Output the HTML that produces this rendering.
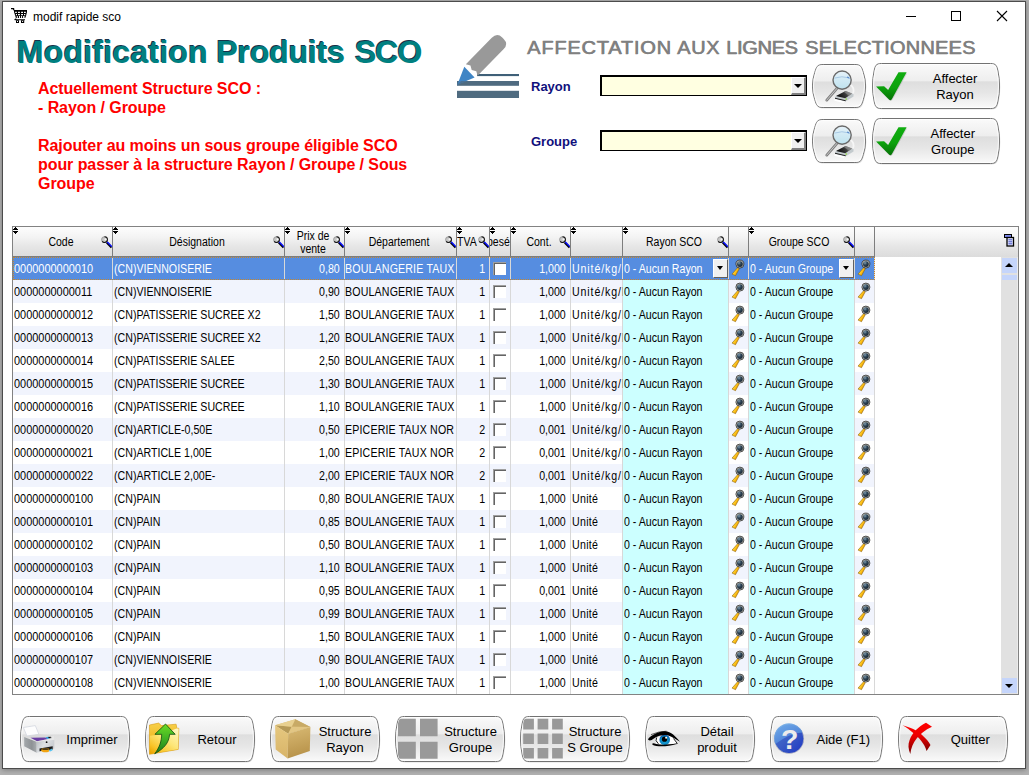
<!DOCTYPE html>
<html lang="fr"><head><meta charset="utf-8"><title>modif rapide sco</title>
<style>
*{box-sizing:border-box;margin:0;padding:0}
html,body{width:1029px;height:775px;overflow:hidden}
body{position:relative;background:#b2b2b2;font-family:"Liberation Sans",sans-serif;font-size:11px;color:#000}
.abs{position:absolute}
.win{position:absolute;left:2px;top:1px;width:1024px;height:768px;background:#fff;border:1px solid #4c4c4c;box-shadow:0 1px 5px 0 rgba(0,0,0,.32)}
.ttl{position:absolute;left:33px;top:9px;font-size:12px;line-height:16px;color:#000;white-space:nowrap}
.h1{position:absolute;top:33px;font-size:32px;line-height:38px;font-weight:bold;color:#008080;white-space:nowrap;text-shadow:-1px -1px 0 #16324a}
.red{position:absolute;left:38px;top:79px;width:400px;letter-spacing:-.07px;font-size:16px;line-height:19px;font-weight:bold;color:#ff0000}
.aff{position:absolute;top:35px;font-size:20px;line-height:24px;color:#808080;white-space:nowrap;transform:scaleY(.96);transform-origin:0 75%;text-shadow:.6px 0 0 #808080;-webkit-text-stroke:.3px #808080}
.lbl{position:absolute;left:531px;font-size:13px;line-height:16px;font-weight:bold;color:#10107c;white-space:nowrap}
.combo{position:absolute;left:600px;width:207px;height:21px;background:#ffffe1;border:2px solid #000;border-right-width:1px;border-bottom-width:1px}
.combo b{position:absolute;right:0;top:0;width:15px;height:18px;background:#f0f0f0;border:1px solid #fff;border-right:2px solid #808080;border-bottom:2px solid #808080}
.combo b:after{content:"";position:absolute;left:2px;top:6px;border:4px solid transparent;border-top:4px solid #000;border-bottom:none}
.btn{position:absolute;border:1px solid transparent;font-size:13px;line-height:16px;color:#000;text-align:center}
.bb{position:absolute;left:-1px;top:-1px}
.btn .t{position:absolute;left:0;right:0;text-align:center;white-space:nowrap}
.grid{position:absolute;left:12px;top:226px;width:1007px;height:469px;background:#fff;border:1px solid #828282}
.hd{position:absolute;left:0;top:0;height:30px;width:1005px;background:linear-gradient(#fdfdfd 0%,#f3f3f3 35%,#e6e6e6 65%,#dcdcdc 100%)}
.hd:after{content:"";position:absolute;left:0;top:29px;width:862px;height:1px;background:#7d7d7d}
.hc{position:absolute;top:0;height:29px;border-right:1px solid #7d7d7d;white-space:nowrap;overflow:hidden}
.hc .tx{position:absolute;font-size:12px;line-height:13px;text-align:center;transform:scaleX(.875);transform-origin:50% 0}
.rows{position:absolute;left:0;top:30px;width:988px;height:437px;overflow:hidden}
.bg{position:absolute;left:0;width:862px;height:23px}
.bg.alt{background:#f1f4fd}
.bg.sel{background:#568de0}
.cy{position:absolute;top:23px;width:105px;height:414px;background:#ccffff}
.vl{position:absolute;top:0;width:1px;height:437px;background:#d8d8d8}
.focus{position:absolute;left:0;top:0;width:862px;height:23px;border:1px dotted #c8862a}
.r{position:absolute;left:0;width:863px;height:23px;white-space:nowrap}
.r.sel{color:#fff}
.c{position:absolute;top:0;height:23px;line-height:24px;font-size:12px;overflow:hidden;transform:scaleX(.885);white-space:nowrap}
.key{position:absolute;top:2px}
.cb{position:absolute;left:480px;top:5px;width:13px;height:13px;background:#fff;box-shadow:inset 1px 1px 0 #a0a0a0,inset 2px 2px 0 #646464}
.dd{position:absolute;top:2px;width:15px;height:19px;background:#f0f0f0;border:1px solid #fff;border-right-color:#606060;border-bottom-color:#606060}
.dd:after{content:"";position:absolute;left:2.5px;top:6px;border:3.7px solid transparent;border-top:4px solid #000;border-bottom:none}
.c1{left:1px;width:107.6px;transform-origin:0 0;transform:scaleX(0.911)}
.c2{left:101px;width:192.1px;transform-origin:0 0}
.c3{left:264.3px;width:66.7px;padding-right:4.5px;text-align:right;transform-origin:100% 0}
.c4{left:332px;width:125.4px;transform-origin:0 0}
.c5{left:439.8px;width:36.2px;padding-right:4.5px;text-align:right;transform-origin:100% 0}
.c7{left:490.3px;width:66.7px;padding-right:4.5px;text-align:right;transform-origin:100% 0}
.c8{left:559px;width:56.5px;transform-origin:0 0}
.c9{left:611px;width:117.5px;transform-origin:0 0}
.c11{left:737px;width:117.5px;transform-origin:0 0}
.c8{letter-spacing:1px}
.c8.u{letter-spacing:.35px}
.c4{letter-spacing:.18px}
</style></head>
<body>
<svg width="0" height="0" style="position:absolute">
<defs>
<linearGradient id="gDev" x1="0" y1="0.3" x2="1" y2="0"><stop offset="0" stop-color="#0e0e0e"/><stop offset="0.5" stop-color="#3a3a3a"/><stop offset="1" stop-color="#b0b0b0"/></linearGradient>
<linearGradient id="gBtn" x1="0" y1="0" x2="0" y2="1"><stop offset="0" stop-color="#fbfbfb"/><stop offset="0.12" stop-color="#f6f6f6"/><stop offset="0.38" stop-color="#eeeeee"/><stop offset="0.41" stop-color="#dedede"/><stop offset="0.65" stop-color="#e6e6e6"/><stop offset="0.88" stop-color="#f3f3f3"/><stop offset="1" stop-color="#fafafa"/></linearGradient>
<linearGradient id="gHandle" x1="0" y1="0" x2="1" y2="0.6"><stop offset="0" stop-color="#ffe04a"/><stop offset="0.55" stop-color="#ffc81e"/><stop offset="1" stop-color="#e08a00"/></linearGradient>
<radialGradient id="gLens" cx="0.35" cy="0.3" r="0.75"><stop offset="0" stop-color="#7f9cb0"/><stop offset="0.45" stop-color="#2f4658"/><stop offset="1" stop-color="#16222e"/></radialGradient>
<linearGradient id="gCheck" x1="0" y1="0" x2="0" y2="1"><stop offset="0" stop-color="#10ad10"/><stop offset="0.55" stop-color="#0ca20c"/><stop offset="1" stop-color="#087208"/></linearGradient>
<linearGradient id="gGlass" x1="0" y1="0" x2="0" y2="1"><stop offset="0" stop-color="#e8f3fa"/><stop offset="0.4" stop-color="#d4ebf5"/><stop offset="1" stop-color="#bfe2ee"/></linearGradient>
<g id="keyico">
<path d="M1.0 15.1 L4.5 16.7 L8.3 9.7 L6.8 8.5 Z" fill="url(#gHandle)" stroke="#7a5200" stroke-width="0.5"/>
<circle cx="8.9" cy="5.1" r="4" fill="#c4c4bc" stroke="#2b2b2b" stroke-width="0.8"/>
<circle cx="8.9" cy="5.1" r="2.9" fill="url(#gLens)"/>
</g>
<g id="hmag">
<path d="M7.7 7.5 L12.5 12.5" stroke="#000" stroke-width="2"/>
<path d="M8 6.8 L13 11.8" stroke="#0a12ff" stroke-width="1.6"/>
<circle cx="5.5" cy="4.6" r="2.9" fill="#c6c6c6" stroke="#9a9a9a" stroke-width="1"/>
<path d="M5.5 1.7 A2.9 2.9 0 0 1 5.5 7.5 A2.9 2.9 0 0 1 3.2 6.4" fill="none" stroke="#111" stroke-width="1.1"/>
<circle cx="6.6" cy="4.4" r="1.1" fill="#f4f4f4"/>
</g>
<g id="hsort" shape-rendering="crispEdges">
<path d="M2 0h1v1h-1z M1 1h3v1h-3z M0 2h5v1h-5z M0 4h5v1h-5z M1 5h3v1h-3z M2 6h1v1h-1z" fill="#000"/>
</g>
<g id="bigmag">
<path d="M13.8 30.6 L24.4 18.4" stroke="#7e7e7e" stroke-width="2.8" stroke-linecap="round"/>
<path d="M13.8 30.6 L24.4 18.4" stroke="#cfcfcf" stroke-width="0.9" stroke-linecap="round"/>
<path d="M22 27.5 L32.5 21.5 L40.5 24.5 L40.5 27 L32.8 31.8 L22 29.2 Z" fill="#c3cacd"/>
<path d="M23 26.6 L32.5 21.6 L39.2 24 L32.2 28.8 Z" fill="url(#gDev)"/>
<path d="M31 22.4 L32.5 21.6 L39.2 24 L36 26.2 Z" fill="#8c8c8c" opacity=".7"/>
<path d="M22 28.2 L32.6 30.8 L32.8 31.8 L22 29.2 Z" fill="#1e1e1e"/>
<path d="M21.5 30.4 L31 32.8" stroke="#fff" stroke-width="1.5"/>
<circle cx="33.2" cy="29.6" r="0.8" fill="#8fdc3a"/>
<path d="M37 15 Q42 18 40 24" fill="none" stroke="#f6f6f6" stroke-width="1.8"/>
<circle cx="29.1" cy="10.6" r="9.1" fill="url(#gGlass)" stroke="#6a6a6a" stroke-width="1.4"/>
<path d="M21.5 8.6 Q29 6 36 8.4" fill="none" stroke="#a9c9e4" stroke-width="1"/>
<path d="M34 7.6 Q35.8 7.8 36.4 9" fill="none" stroke="#5f8fd0" stroke-width="1.1"/>
</g>
<g id="check">
<path d="M4.8 24.4 L12.8 24 L16.8 27.6 L27 10.2 L35.2 10.2 L20.4 37 Q19 38.6 17.6 37.6 Z" fill="#000" opacity=".12"/>
<path d="M4.05 23.5 L12.1 23.2 L16.1 26.9 L26.5 9.2 L34.6 9.2 L19.8 36.3 Q18.6 37.8 17.2 36.8 Z" fill="url(#gCheck)"/>
</g>
</defs>
</svg>
<div class="win"></div>
<svg class="abs" style="left:10px;top:6px" width="20" height="18" viewBox="0 0 20 18">
<path d="M1 2h3.2v1.2h-3.2z M3.6 2.6l1.2 1.6-0.9 0.6-1.2-1.6z" fill="#000"/>
<path d="M4 4H17V6L16 10L15.2 12.1H5.9L5 9L4 6Z" fill="#000"/>
<path d="M5.2 5.7h1.6v1.3h-1.6z M8 5.7h1.9v1.3h-1.9z M11.1 5.7h1.9v1.3h-1.9z M14 5.7h1.8v1.3h-1.8z M5.9 7.9h1.1v1.3h-1.1z M8 7.9h1.9v1.3h-1.9z M11.1 7.9h1.9v1.3h-1.9z M14 7.9h1.3v1.3h-1.3z M6.8 10h1v1.9h-1z M9 10h1v1.9h-1z M11.1 10h1v1.9h-1z M13.1 10h1.4v1.9h-1.4z" fill="#fff"/>
<path d="M5.4 12.5 L4.2 13.5 L4.8 14.3 H15 V13.3 H6.3 L6.6 12.8 Z" fill="#000"/>
<path d="M6 14.2h3v2.8h-3z M11 14.2h3.2v2.8h-3.2z" fill="#000"/>
<path d="M7 15.1h1v1h-1z M12.1 15.1h1v1h-1z" fill="#fff"/>
</svg>
<div class="ttl">modif rapide sco</div>
<svg class="abs" style="left:900px;top:5px" width="115" height="24" viewBox="0 0 115 24">
<path d="M6 11.5 H16" stroke="#000" stroke-width="1"/>
<rect x="51.5" y="6.5" width="9" height="9" fill="none" stroke="#000" stroke-width="1"/>
<path d="M97 6 L107 16 M107 6 L97 16" stroke="#000" stroke-width="1.1"/>
</svg>
<div class="h1" style="left:17px;letter-spacing:.22px">Modification</div><div class="h1" style="left:216.4px;letter-spacing:-.15px">Produits</div><div class="h1" style="left:355px;letter-spacing:-1px">SCO</div>
<div class="red">Actuellement Structure SCO :<br>- Rayon / Groupe<br><br>Rajouter au moins un sous groupe éligible SCO<br>pour passer à la structure Rayon / Groupe / Sous<br>Groupe</div>
<svg class="abs" style="left:448px;top:28px" width="80" height="80" viewBox="0 0 80 80">
<rect x="9" y="62.8" width="62" height="7.2" fill="#4f6b80"/>
<rect x="9" y="53" width="62" height="4.8" fill="#4f6b80"/>
<rect x="29" y="46" width="42" height="2.1" fill="#3f6078"/>
<path d="M9.3 56.8 L16.3 38.8 L26.6 49.6 Z" fill="#3f85c5"/>
<path d="M9.3 56.6 L13 53 L20 53 Z" fill="#4a7194"/>
<g transform="translate(23.7,42) rotate(-45.5)">
<path d="M0 -8.2 L37 -8.2 Q44.6 -8.2 44.6 -1 L44.6 1 Q44.6 8.2 37 8.2 L0 8.2 L2.4 4.1 L0 0 L2.4 -4.1 Z" fill="#999999"/>
</g>
</svg>
<div class="aff" style="left:527px;letter-spacing:.8px">AFFECTATION</div><div class="aff" style="left:677px;letter-spacing:.6px">AUX</div><div class="aff" style="left:726px;letter-spacing:-.3px">LIGNES</div><div class="aff" style="left:805px;letter-spacing:.2px">SELECTIONNEES</div>
<div class="lbl" style="top:79px">Rayon</div>
<div class="lbl" style="top:134px">Groupe</div>
<div class="combo" style="top:75px"><b></b></div>
<div class="combo" style="top:130px"><b></b></div>
<div class="btn" style="left:812px;top:64px;width:54px;height:44px"><svg class="bb" width="56" height="46" viewBox="0 0 56 46"><path d="M11.20 0.50 H42.80 C49.17 0.50 49.47 3.04 51.30 8.50 A42.52 42.52 0 0 1 51.30 35.50 C49.47 40.96 49.17 43.50 42.80 43.50 H11.20 C4.83 43.50 4.53 40.96 2.70 35.50 A42.52 42.52 0 0 1 2.70 8.50 C4.53 3.04 4.83 0.50 11.20 0.50 Z" transform="translate(0.8,1)" fill="#000" opacity=".13"/><path d="M11.20 0.50 H42.80 C49.17 0.50 49.47 3.04 51.30 8.50 A42.52 42.52 0 0 1 51.30 35.50 C49.47 40.96 49.17 43.50 42.80 43.50 H11.20 C4.83 43.50 4.53 40.96 2.70 35.50 A42.52 42.52 0 0 1 2.70 8.50 C4.53 3.04 4.83 0.50 11.20 0.50 Z" fill="url(#gBtn)" stroke="#727272" stroke-width="1"/><path d="M11.40 1.50 H42.60 C48.38 1.50 48.63 3.79 50.30 8.70 A41.30 41.30 0 0 1 50.30 35.30 C48.63 40.21 48.38 42.50 42.60 42.50 H11.40 C5.62 42.50 5.37 40.21 3.70 35.30 A41.30 41.30 0 0 1 3.70 8.70 C5.37 3.79 5.62 1.50 11.40 1.50 Z" fill="none" stroke="#fff" stroke-width="1.2" opacity=".75"/></svg><svg class="abs" style="left:1px;top:0" width="53" height="44" viewBox="0 0 53 44"><use href="#bigmag" x="-1" y="4.5"/></svg></div>
<div class="btn" style="left:812px;top:119px;width:54px;height:44px"><svg class="bb" width="56" height="46" viewBox="0 0 56 46"><path d="M11.20 0.50 H42.80 C49.17 0.50 49.47 3.04 51.30 8.50 A42.52 42.52 0 0 1 51.30 35.50 C49.47 40.96 49.17 43.50 42.80 43.50 H11.20 C4.83 43.50 4.53 40.96 2.70 35.50 A42.52 42.52 0 0 1 2.70 8.50 C4.53 3.04 4.83 0.50 11.20 0.50 Z" transform="translate(0.8,1)" fill="#000" opacity=".13"/><path d="M11.20 0.50 H42.80 C49.17 0.50 49.47 3.04 51.30 8.50 A42.52 42.52 0 0 1 51.30 35.50 C49.47 40.96 49.17 43.50 42.80 43.50 H11.20 C4.83 43.50 4.53 40.96 2.70 35.50 A42.52 42.52 0 0 1 2.70 8.50 C4.53 3.04 4.83 0.50 11.20 0.50 Z" fill="url(#gBtn)" stroke="#727272" stroke-width="1"/><path d="M11.40 1.50 H42.60 C48.38 1.50 48.63 3.79 50.30 8.70 A41.30 41.30 0 0 1 50.30 35.30 C48.63 40.21 48.38 42.50 42.60 42.50 H11.40 C5.62 42.50 5.37 40.21 3.70 35.30 A41.30 41.30 0 0 1 3.70 8.70 C5.37 3.79 5.62 1.50 11.40 1.50 Z" fill="none" stroke="#fff" stroke-width="1.2" opacity=".75"/></svg><svg class="abs" style="left:1px;top:0" width="53" height="44" viewBox="0 0 53 44"><use href="#bigmag" x="-1" y="4.5"/></svg></div>
<div class="btn" style="left:872px;top:63px;width:128px;height:46px"><svg class="bb" width="130" height="48" viewBox="0 0 130 48"><path d="M9.50 0.50 H118.50 C124.05 0.50 124.78 2.69 125.90 7.90 A72.05 72.05 0 0 1 125.90 38.10 C124.78 43.31 124.05 45.50 118.50 45.50 H9.50 C3.95 45.50 3.22 43.31 2.10 38.10 A72.05 72.05 0 0 1 2.10 7.90 C3.22 2.69 3.95 0.50 9.50 0.50 Z" transform="translate(0.8,1)" fill="#000" opacity=".13"/><path d="M9.50 0.50 H118.50 C124.05 0.50 124.78 2.69 125.90 7.90 A72.05 72.05 0 0 1 125.90 38.10 C124.78 43.31 124.05 45.50 118.50 45.50 H9.50 C3.95 45.50 3.22 43.31 2.10 38.10 A72.05 72.05 0 0 1 2.10 7.90 C3.22 2.69 3.95 0.50 9.50 0.50 Z" fill="url(#gBtn)" stroke="#727272" stroke-width="1"/><path d="M9.70 1.50 H118.30 C123.25 1.50 123.89 3.46 124.90 8.10 A70.18 70.18 0 0 1 124.90 37.90 C123.89 42.54 123.25 44.50 118.30 44.50 H9.70 C4.75 44.50 4.11 42.54 3.10 37.90 A70.18 70.18 0 0 1 3.10 8.10 C4.11 3.46 4.75 1.50 9.70 1.50 Z" fill="none" stroke="#fff" stroke-width="1.2" opacity=".75"/></svg><svg class="abs" style="left:-1px;top:-1px" width="40" height="44" viewBox="0 0 40 44"><use href="#check"/></svg><span class="t" style="left:38px;top:7px">Affecter<br>Rayon</span></div>
<div class="btn" style="left:872px;top:118px;width:128px;height:46px"><svg class="bb" width="130" height="48" viewBox="0 0 130 48"><path d="M9.50 0.50 H118.50 C124.05 0.50 124.78 2.69 125.90 7.90 A72.05 72.05 0 0 1 125.90 38.10 C124.78 43.31 124.05 45.50 118.50 45.50 H9.50 C3.95 45.50 3.22 43.31 2.10 38.10 A72.05 72.05 0 0 1 2.10 7.90 C3.22 2.69 3.95 0.50 9.50 0.50 Z" transform="translate(0.8,1)" fill="#000" opacity=".13"/><path d="M9.50 0.50 H118.50 C124.05 0.50 124.78 2.69 125.90 7.90 A72.05 72.05 0 0 1 125.90 38.10 C124.78 43.31 124.05 45.50 118.50 45.50 H9.50 C3.95 45.50 3.22 43.31 2.10 38.10 A72.05 72.05 0 0 1 2.10 7.90 C3.22 2.69 3.95 0.50 9.50 0.50 Z" fill="url(#gBtn)" stroke="#727272" stroke-width="1"/><path d="M9.70 1.50 H118.30 C123.25 1.50 123.89 3.46 124.90 8.10 A70.18 70.18 0 0 1 124.90 37.90 C123.89 42.54 123.25 44.50 118.30 44.50 H9.70 C4.75 44.50 4.11 42.54 3.10 37.90 A70.18 70.18 0 0 1 3.10 8.10 C4.11 3.46 4.75 1.50 9.70 1.50 Z" fill="none" stroke="#fff" stroke-width="1.2" opacity=".75"/></svg><svg class="abs" style="left:-1px;top:-1px" width="40" height="44" viewBox="0 0 40 44"><use href="#check"/></svg><span class="t" style="left:33.5px;top:7px">Affecter<br>Groupe</span></div>
<div class="grid">
<div class="hd">
<div class="hc" style="left:0px;width:100px"><svg class="abs" style="left:0;top:0" width="5" height="7" viewBox="0 0 5 7"><use href="#hsort"/></svg><span class="tx" style="left:-12px;width:120px;top:9px">Code</span><svg class="abs" style="right:0px;top:8px" width="13" height="14" viewBox="0 0 13 14"><use href="#hmag"/></svg></div>
<div class="hc" style="left:100px;width:172px"><svg class="abs" style="left:0;top:0" width="5" height="7" viewBox="0 0 5 7"><use href="#hsort"/></svg><span class="tx" style="left:24px;width:120px;top:9px">Désignation</span><svg class="abs" style="right:0px;top:8px" width="13" height="14" viewBox="0 0 13 14"><use href="#hmag"/></svg></div>
<div class="hc" style="left:272px;width:60px"><svg class="abs" style="left:0;top:0" width="5" height="7" viewBox="0 0 5 7"><use href="#hsort"/></svg><span class="tx" style="left:-32px;width:120px;top:3px">Prix de<br>vente</span><svg class="abs" style="right:0px;top:8px" width="13" height="14" viewBox="0 0 13 14"><use href="#hmag"/></svg></div>
<div class="hc" style="left:332px;width:112px"><svg class="abs" style="left:0;top:0" width="5" height="7" viewBox="0 0 5 7"><use href="#hsort"/></svg><span class="tx" style="left:-6px;width:120px;top:9px">Département</span><svg class="abs" style="right:0px;top:8px" width="13" height="14" viewBox="0 0 13 14"><use href="#hmag"/></svg></div>
<div class="hc" style="left:444px;width:33px"><svg class="abs" style="left:0;top:0" width="5" height="7" viewBox="0 0 5 7"><use href="#hsort"/></svg><span class="tx" style="left:0px;text-align:left;transform-origin:0 0;top:9px">TVA</span><svg class="abs" style="right:0px;top:8px" width="13" height="14" viewBox="0 0 13 14"><use href="#hmag"/></svg></div>
<div class="hc" style="left:477px;width:21px"><svg class="abs" style="left:0;top:0" width="5" height="7" viewBox="0 0 5 7"><use href="#hsort"/></svg><span class="tx" style="left:-3px;text-align:left;transform-origin:0 0;top:9px">pesé</span></div>
<div class="hc" style="left:498px;width:60px"><svg class="abs" style="left:0;top:0" width="5" height="7" viewBox="0 0 5 7"><use href="#hsort"/></svg><span class="tx" style="left:-32px;width:120px;top:9px">Cont.</span><svg class="abs" style="right:0px;top:8px" width="13" height="14" viewBox="0 0 13 14"><use href="#hmag"/></svg></div>
<div class="hc" style="left:558px;width:52px"><svg class="abs" style="left:0;top:0" width="5" height="7" viewBox="0 0 5 7"><use href="#hsort"/></svg></div>
<div class="hc" style="left:610px;width:106px"><svg class="abs" style="left:0;top:0" width="5" height="7" viewBox="0 0 5 7"><use href="#hsort"/></svg><span class="tx" style="left:-9px;width:120px;top:9px">Rayon SCO</span><svg class="abs" style="right:0px;top:8px" width="13" height="14" viewBox="0 0 13 14"><use href="#hmag"/></svg></div>
<div class="hc" style="left:716px;width:20px"></div>
<div class="hc" style="left:736px;width:106px"><svg class="abs" style="left:0;top:0" width="5" height="7" viewBox="0 0 5 7"><use href="#hsort"/></svg><span class="tx" style="left:-10px;width:120px;top:9px">Groupe SCO</span><svg class="abs" style="right:0px;top:8px" width="13" height="14" viewBox="0 0 13 14"><use href="#hmag"/></svg></div>
<div class="hc" style="left:842px;width:20px"></div>
<svg class="abs" style="left:991px;top:7px" width="11" height="13" viewBox="0 0 11 13"><rect x="0.5" y="0.5" width="7" height="3" fill="#7a86e8" stroke="#000" stroke-width="1"/><rect x="3" y="3.5" width="6.5" height="8.5" fill="#e6e9ff" stroke="#000" stroke-width="1.3"/><path d="M4.4 5.8 H8.2 M4.4 7.8 H8.2 M4.4 9.8 H8.2" stroke="#4450c8" stroke-width="1"/></svg>
</div>
<div class="rows">
<div class="bg sel" style="top:0"></div>
<div class="bg alt" style="top:23px"></div><div class="bg alt" style="top:69px"></div><div class="bg alt" style="top:115px"></div><div class="bg alt" style="top:161px"></div><div class="bg alt" style="top:207px"></div><div class="bg alt" style="top:253px"></div><div class="bg alt" style="top:299px"></div><div class="bg alt" style="top:345px"></div><div class="bg alt" style="top:391px"></div>
<div class="cy" style="left:610px"></div><div class="cy" style="left:736px"></div>
<div class="vl" style="left:99px"></div><div class="vl" style="left:271px"></div><div class="vl" style="left:331px"></div><div class="vl" style="left:443px"></div><div class="vl" style="left:476px"></div><div class="vl" style="left:497px"></div><div class="vl" style="left:557px"></div><div class="vl" style="left:609px"></div><div class="vl" style="left:715px"></div><div class="vl" style="left:735px"></div><div class="vl" style="left:841px"></div><div class="vl" style="left:861px"></div>
<div class="focus"></div>
<div class="r sel" style="top:0px"><span class="c c1">0000000000010</span><span class="c c2">(CN)VIENNOISERIE</span><span class="c c3">0,80</span><span class="c c4">BOULANGERIE TAUX</span><span class="c c5">1</span><i class="cb"></i><span class="c c7">1,000</span><span class="c c8">Unité/kg/l</span><span class="c c9">0 - Aucun Rayon</span><svg class="key" style="left:718px" width="15" height="19" viewBox="0 0 15 19"><use href="#keyico"/></svg><span class="c c11">0 - Aucun Groupe</span><svg class="key" style="left:844px" width="15" height="19" viewBox="0 0 15 19"><use href="#keyico"/></svg><b class="dd" style="left:700px"></b><b class="dd" style="left:826px"></b></div>
<div class="r" style="top:23px"><span class="c c1">0000000000011</span><span class="c c2">(CN)VIENNOISERIE</span><span class="c c3">0,90</span><span class="c c4">BOULANGERIE TAUX</span><span class="c c5">1</span><i class="cb"></i><span class="c c7">1,000</span><span class="c c8">Unité/kg/l</span><span class="c c9">0 - Aucun Rayon</span><svg class="key" style="left:718px" width="15" height="19" viewBox="0 0 15 19"><use href="#keyico"/></svg><span class="c c11">0 - Aucun Groupe</span><svg class="key" style="left:844px" width="15" height="19" viewBox="0 0 15 19"><use href="#keyico"/></svg></div>
<div class="r" style="top:46px"><span class="c c1">0000000000012</span><span class="c c2">(CN)PATISSERIE SUCREE X2</span><span class="c c3">1,50</span><span class="c c4">BOULANGERIE TAUX</span><span class="c c5">1</span><i class="cb"></i><span class="c c7">1,000</span><span class="c c8">Unité/kg/l</span><span class="c c9">0 - Aucun Rayon</span><svg class="key" style="left:718px" width="15" height="19" viewBox="0 0 15 19"><use href="#keyico"/></svg><span class="c c11">0 - Aucun Groupe</span><svg class="key" style="left:844px" width="15" height="19" viewBox="0 0 15 19"><use href="#keyico"/></svg></div>
<div class="r" style="top:69px"><span class="c c1">0000000000013</span><span class="c c2">(CN)PATISSERIE SUCREE X2</span><span class="c c3">1,20</span><span class="c c4">BOULANGERIE TAUX</span><span class="c c5">1</span><i class="cb"></i><span class="c c7">1,000</span><span class="c c8">Unité/kg/l</span><span class="c c9">0 - Aucun Rayon</span><svg class="key" style="left:718px" width="15" height="19" viewBox="0 0 15 19"><use href="#keyico"/></svg><span class="c c11">0 - Aucun Groupe</span><svg class="key" style="left:844px" width="15" height="19" viewBox="0 0 15 19"><use href="#keyico"/></svg></div>
<div class="r" style="top:92px"><span class="c c1">0000000000014</span><span class="c c2">(CN)PATISSERIE SALEE</span><span class="c c3">2,50</span><span class="c c4">BOULANGERIE TAUX</span><span class="c c5">1</span><i class="cb"></i><span class="c c7">1,000</span><span class="c c8">Unité/kg/l</span><span class="c c9">0 - Aucun Rayon</span><svg class="key" style="left:718px" width="15" height="19" viewBox="0 0 15 19"><use href="#keyico"/></svg><span class="c c11">0 - Aucun Groupe</span><svg class="key" style="left:844px" width="15" height="19" viewBox="0 0 15 19"><use href="#keyico"/></svg></div>
<div class="r" style="top:115px"><span class="c c1">0000000000015</span><span class="c c2">(CN)PATISSERIE SUCREE</span><span class="c c3">1,30</span><span class="c c4">BOULANGERIE TAUX</span><span class="c c5">1</span><i class="cb"></i><span class="c c7">1,000</span><span class="c c8">Unité/kg/l</span><span class="c c9">0 - Aucun Rayon</span><svg class="key" style="left:718px" width="15" height="19" viewBox="0 0 15 19"><use href="#keyico"/></svg><span class="c c11">0 - Aucun Groupe</span><svg class="key" style="left:844px" width="15" height="19" viewBox="0 0 15 19"><use href="#keyico"/></svg></div>
<div class="r" style="top:138px"><span class="c c1">0000000000016</span><span class="c c2">(CN)PATISSERIE SUCREE</span><span class="c c3">1,10</span><span class="c c4">BOULANGERIE TAUX</span><span class="c c5">1</span><i class="cb"></i><span class="c c7">1,000</span><span class="c c8">Unité/kg/l</span><span class="c c9">0 - Aucun Rayon</span><svg class="key" style="left:718px" width="15" height="19" viewBox="0 0 15 19"><use href="#keyico"/></svg><span class="c c11">0 - Aucun Groupe</span><svg class="key" style="left:844px" width="15" height="19" viewBox="0 0 15 19"><use href="#keyico"/></svg></div>
<div class="r" style="top:161px"><span class="c c1">0000000000020</span><span class="c c2">(CN)ARTICLE-0,50E</span><span class="c c3">0,50</span><span class="c c4">EPICERIE TAUX NOR</span><span class="c c5">2</span><i class="cb"></i><span class="c c7">0,001</span><span class="c c8">Unité/kg/l</span><span class="c c9">0 - Aucun Rayon</span><svg class="key" style="left:718px" width="15" height="19" viewBox="0 0 15 19"><use href="#keyico"/></svg><span class="c c11">0 - Aucun Groupe</span><svg class="key" style="left:844px" width="15" height="19" viewBox="0 0 15 19"><use href="#keyico"/></svg></div>
<div class="r" style="top:184px"><span class="c c1">0000000000021</span><span class="c c2">(CN)ARTICLE 1,00E</span><span class="c c3">1,00</span><span class="c c4">EPICERIE TAUX NOR</span><span class="c c5">2</span><i class="cb"></i><span class="c c7">0,001</span><span class="c c8">Unité/kg/l</span><span class="c c9">0 - Aucun Rayon</span><svg class="key" style="left:718px" width="15" height="19" viewBox="0 0 15 19"><use href="#keyico"/></svg><span class="c c11">0 - Aucun Groupe</span><svg class="key" style="left:844px" width="15" height="19" viewBox="0 0 15 19"><use href="#keyico"/></svg></div>
<div class="r" style="top:207px"><span class="c c1">0000000000022</span><span class="c c2">(CN)ARTICLE 2,00E-</span><span class="c c3">2,00</span><span class="c c4">EPICERIE TAUX NOR</span><span class="c c5">2</span><i class="cb"></i><span class="c c7">0,001</span><span class="c c8">Unité/kg/l</span><span class="c c9">0 - Aucun Rayon</span><svg class="key" style="left:718px" width="15" height="19" viewBox="0 0 15 19"><use href="#keyico"/></svg><span class="c c11">0 - Aucun Groupe</span><svg class="key" style="left:844px" width="15" height="19" viewBox="0 0 15 19"><use href="#keyico"/></svg></div>
<div class="r" style="top:230px"><span class="c c1">0000000000100</span><span class="c c2">(CN)PAIN</span><span class="c c3">0,80</span><span class="c c4">BOULANGERIE TAUX</span><span class="c c5">1</span><i class="cb"></i><span class="c c7">1,000</span><span class="c c8 u">Unité</span><span class="c c9">0 - Aucun Rayon</span><svg class="key" style="left:718px" width="15" height="19" viewBox="0 0 15 19"><use href="#keyico"/></svg><span class="c c11">0 - Aucun Groupe</span><svg class="key" style="left:844px" width="15" height="19" viewBox="0 0 15 19"><use href="#keyico"/></svg></div>
<div class="r" style="top:253px"><span class="c c1">0000000000101</span><span class="c c2">(CN)PAIN</span><span class="c c3">0,85</span><span class="c c4">BOULANGERIE TAUX</span><span class="c c5">1</span><i class="cb"></i><span class="c c7">1,000</span><span class="c c8 u">Unité</span><span class="c c9">0 - Aucun Rayon</span><svg class="key" style="left:718px" width="15" height="19" viewBox="0 0 15 19"><use href="#keyico"/></svg><span class="c c11">0 - Aucun Groupe</span><svg class="key" style="left:844px" width="15" height="19" viewBox="0 0 15 19"><use href="#keyico"/></svg></div>
<div class="r" style="top:276px"><span class="c c1">0000000000102</span><span class="c c2">(CN)PAIN</span><span class="c c3">0,50</span><span class="c c4">BOULANGERIE TAUX</span><span class="c c5">1</span><i class="cb"></i><span class="c c7">1,000</span><span class="c c8 u">Unité</span><span class="c c9">0 - Aucun Rayon</span><svg class="key" style="left:718px" width="15" height="19" viewBox="0 0 15 19"><use href="#keyico"/></svg><span class="c c11">0 - Aucun Groupe</span><svg class="key" style="left:844px" width="15" height="19" viewBox="0 0 15 19"><use href="#keyico"/></svg></div>
<div class="r" style="top:299px"><span class="c c1">0000000000103</span><span class="c c2">(CN)PAIN</span><span class="c c3">1,10</span><span class="c c4">BOULANGERIE TAUX</span><span class="c c5">1</span><i class="cb"></i><span class="c c7">1,000</span><span class="c c8 u">Unité</span><span class="c c9">0 - Aucun Rayon</span><svg class="key" style="left:718px" width="15" height="19" viewBox="0 0 15 19"><use href="#keyico"/></svg><span class="c c11">0 - Aucun Groupe</span><svg class="key" style="left:844px" width="15" height="19" viewBox="0 0 15 19"><use href="#keyico"/></svg></div>
<div class="r" style="top:322px"><span class="c c1">0000000000104</span><span class="c c2">(CN)PAIN</span><span class="c c3">0,95</span><span class="c c4">BOULANGERIE TAUX</span><span class="c c5">1</span><i class="cb"></i><span class="c c7">0,001</span><span class="c c8 u">Unité</span><span class="c c9">0 - Aucun Rayon</span><svg class="key" style="left:718px" width="15" height="19" viewBox="0 0 15 19"><use href="#keyico"/></svg><span class="c c11">0 - Aucun Groupe</span><svg class="key" style="left:844px" width="15" height="19" viewBox="0 0 15 19"><use href="#keyico"/></svg></div>
<div class="r" style="top:345px"><span class="c c1">0000000000105</span><span class="c c2">(CN)PAIN</span><span class="c c3">0,99</span><span class="c c4">BOULANGERIE TAUX</span><span class="c c5">1</span><i class="cb"></i><span class="c c7">1,000</span><span class="c c8 u">Unité</span><span class="c c9">0 - Aucun Rayon</span><svg class="key" style="left:718px" width="15" height="19" viewBox="0 0 15 19"><use href="#keyico"/></svg><span class="c c11">0 - Aucun Groupe</span><svg class="key" style="left:844px" width="15" height="19" viewBox="0 0 15 19"><use href="#keyico"/></svg></div>
<div class="r" style="top:368px"><span class="c c1">0000000000106</span><span class="c c2">(CN)PAIN</span><span class="c c3">1,50</span><span class="c c4">BOULANGERIE TAUX</span><span class="c c5">1</span><i class="cb"></i><span class="c c7">1,000</span><span class="c c8 u">Unité</span><span class="c c9">0 - Aucun Rayon</span><svg class="key" style="left:718px" width="15" height="19" viewBox="0 0 15 19"><use href="#keyico"/></svg><span class="c c11">0 - Aucun Groupe</span><svg class="key" style="left:844px" width="15" height="19" viewBox="0 0 15 19"><use href="#keyico"/></svg></div>
<div class="r" style="top:391px"><span class="c c1">0000000000107</span><span class="c c2">(CN)VIENNOISERIE</span><span class="c c3">0,90</span><span class="c c4">BOULANGERIE TAUX</span><span class="c c5">1</span><i class="cb"></i><span class="c c7">1,000</span><span class="c c8 u">Unité</span><span class="c c9">0 - Aucun Rayon</span><svg class="key" style="left:718px" width="15" height="19" viewBox="0 0 15 19"><use href="#keyico"/></svg><span class="c c11">0 - Aucun Groupe</span><svg class="key" style="left:844px" width="15" height="19" viewBox="0 0 15 19"><use href="#keyico"/></svg></div>
<div class="r" style="top:414px"><span class="c c1">0000000000108</span><span class="c c2">(CN)VIENNOISERIE</span><span class="c c3">1,00</span><span class="c c4">BOULANGERIE TAUX</span><span class="c c5">1</span><i class="cb"></i><span class="c c7">1,000</span><span class="c c8 u">Unité</span><span class="c c9">0 - Aucun Rayon</span><svg class="key" style="left:718px" width="15" height="19" viewBox="0 0 15 19"><use href="#keyico"/></svg><span class="c c11">0 - Aucun Groupe</span><svg class="key" style="left:844px" width="15" height="19" viewBox="0 0 15 19"><use href="#keyico"/></svg></div>
</div>
<div class="abs" style="left:988px;top:30px;width:17px;height:437px;background:#e1e1e1;border-right:1px solid #ebebeb">
<div class="abs" style="left:1px;top:1px;width:15px;height:15px;background:#c5d5fb"></div>
<div class="abs" style="left:1px;top:18px;width:15px;height:5px;background:#c5d5fb"></div>
<div class="abs" style="left:1px;top:421px;width:15px;height:15px;background:#c5d5fb"></div>
<svg class="abs" style="left:4px;top:6px" width="8" height="4" viewBox="0 0 8 4"><path d="M0 4 L4 0 L8 4 Z" fill="#000"/></svg>
<svg class="abs" style="left:4px;top:427px" width="8" height="4" viewBox="0 0 8 4"><path d="M0 0 L4 4 L8 0 Z" fill="#000"/></svg>
</div>
</div>
<svg width="0" height="0" style="position:absolute">
<defs>
<linearGradient id="gPrL" x1="0" y1="0" x2="1" y2="0"><stop offset="0" stop-color="#a4a8ab"/><stop offset="0.6" stop-color="#8e9295"/><stop offset="1" stop-color="#a9adb0"/></linearGradient>
<linearGradient id="gPrF" x1="0" y1="0" x2="1" y2="0.4"><stop offset="0" stop-color="#b9bdc1"/><stop offset="0.5" stop-color="#dfe2e5"/><stop offset="1" stop-color="#c9ccd0"/></linearGradient>
<linearGradient id="gFoB" x1="0" y1="0" x2="0" y2="1"><stop offset="0" stop-color="#f7d04a"/><stop offset="1" stop-color="#e9a400"/></linearGradient>
<linearGradient id="gFoF" x1="0.9" y1="0" x2="0.1" y2="1"><stop offset="0" stop-color="#fff7c0"/><stop offset="0.45" stop-color="#fde678"/><stop offset="0.8" stop-color="#f8c52a"/><stop offset="1" stop-color="#eaa400"/></linearGradient>
<linearGradient id="gArr" x1="0" y1="0" x2="0" y2="1"><stop offset="0" stop-color="#6cdc24"/><stop offset="0.5" stop-color="#3fb024"/><stop offset="1" stop-color="#1f7a1a"/></linearGradient>
<linearGradient id="gBxL" x1="0" y1="0" x2="0" y2="1"><stop offset="0" stop-color="#e6c880"/><stop offset="1" stop-color="#d8b468"/></linearGradient>
<linearGradient id="gBxR" x1="0" y1="0" x2="0.2" y2="1"><stop offset="0" stop-color="#d9ba74"/><stop offset="1" stop-color="#b8934a"/></linearGradient>
<linearGradient id="gHelp" x1="0" y1="0" x2="1" y2="1"><stop offset="0" stop-color="#4a7ad6"/><stop offset="0.5" stop-color="#3a5cc4"/><stop offset="1" stop-color="#1c34c4"/></linearGradient>
<linearGradient id="gHelpG" x1="0" y1="0" x2="0.6" y2="1"><stop offset="0" stop-color="#7ab8ee"/><stop offset="1" stop-color="#4a80d8"/></linearGradient>
<linearGradient id="gRed" x1="0" y1="0" x2="0" y2="1"><stop offset="0" stop-color="#ff0000"/><stop offset="0.4" stop-color="#ee0000"/><stop offset="1" stop-color="#7c0000"/></linearGradient>
<radialGradient id="gIris" cx="0.5" cy="0.6" r="0.6"><stop offset="0" stop-color="#19a6d8"/><stop offset="0.7" stop-color="#0b86c2"/><stop offset="1" stop-color="#0a3e9c"/></radialGradient>
</defs>
</svg>
<div class="btn" style="left:20px;top:716px;width:110px;height:46px"><svg class="bb" width="112" height="48" viewBox="0 0 112 48"><path d="M9.50 0.50 H100.50 C106.05 0.50 106.78 2.69 107.90 7.90 A72.05 72.05 0 0 1 107.90 38.10 C106.78 43.31 106.05 45.50 100.50 45.50 H9.50 C3.95 45.50 3.22 43.31 2.10 38.10 A72.05 72.05 0 0 1 2.10 7.90 C3.22 2.69 3.95 0.50 9.50 0.50 Z" transform="translate(0.8,1)" fill="#000" opacity=".13"/><path d="M9.50 0.50 H100.50 C106.05 0.50 106.78 2.69 107.90 7.90 A72.05 72.05 0 0 1 107.90 38.10 C106.78 43.31 106.05 45.50 100.50 45.50 H9.50 C3.95 45.50 3.22 43.31 2.10 38.10 A72.05 72.05 0 0 1 2.10 7.90 C3.22 2.69 3.95 0.50 9.50 0.50 Z" fill="url(#gBtn)" stroke="#727272" stroke-width="1"/><path d="M9.70 1.50 H100.30 C105.25 1.50 105.89 3.46 106.90 8.10 A70.18 70.18 0 0 1 106.90 37.90 C105.89 42.54 105.25 44.50 100.30 44.50 H9.70 C4.75 44.50 4.11 42.54 3.10 37.90 A70.18 70.18 0 0 1 3.10 8.10 C4.11 3.46 4.75 1.50 9.70 1.50 Z" fill="none" stroke="#fff" stroke-width="1.2" opacity=".75"/></svg><svg class="abs" style="left:-3px;top:1px" width="44" height="42" viewBox="0 0 44 42">
<path d="M5.4 9.5 L17.3 7.6 L20.9 16.3 L8.9 17.9 Z" fill="#fdfdfd" stroke="#cfd3dc" stroke-width="0.7"/>
<path d="M6.2 19 L20.9 16.3 L35.8 17.5 L20.6 20.9 Z" fill="#d9d9d9"/>
<path d="M12.5 19.8 L27.1 19.5 L30.4 21.1 L19 23.3 Z" fill="#6b3fa3"/>
<path d="M27.1 19.2 L30.6 18.8 L32.6 20.4 L29.6 21 Z" fill="#3aa8e8"/>
<path d="M29.6 18.9 L32.6 18.7 L34 20 L31.6 20.5 Z" fill="#151515"/>
<path d="M6.2 19 L18.7 23.8 L18.7 34.7 L6.2 28.2 Z" fill="url(#gPrL)"/>
<path d="M18.7 23.8 L36.3 21.7 L36.3 30.4 L18.7 34.7 Z" fill="url(#gPrF)"/>
<path d="M6.2 19 L18.7 23.8 L36.3 21.7 L35.8 17.5 L30.4 21.1 L19 23.3 Z" fill="#ececec" opacity=".55"/>
<path d="M21.5 30.6 L34.7 28.2 L34.7 31.6 L21.5 33.2 Z" fill="#1a1a1a"/>
<ellipse cx="27.4" cy="32.2" rx="4.1" ry="2.1" fill="#f0a311"/>
<path d="M23.5 31.2 Q27.4 29.4 31.3 31.2 Q27.4 32.4 23.5 31.2 Z" fill="#1a1a1a"/>
<path d="M30.8 32.6 L34 30.6 L34.4 32.4 L32 33.6 Z" fill="#55c4f2"/>
<circle cx="28.6" cy="24.2" r="0.9" fill="#111"/>
</svg><span class="t" style="left:34px;top:15px">Imprimer</span></div>
<div class="btn" style="left:145px;top:716px;width:110px;height:46px"><svg class="bb" width="112" height="48" viewBox="0 0 112 48"><path d="M9.50 0.50 H100.50 C106.05 0.50 106.78 2.69 107.90 7.90 A72.05 72.05 0 0 1 107.90 38.10 C106.78 43.31 106.05 45.50 100.50 45.50 H9.50 C3.95 45.50 3.22 43.31 2.10 38.10 A72.05 72.05 0 0 1 2.10 7.90 C3.22 2.69 3.95 0.50 9.50 0.50 Z" transform="translate(0.8,1)" fill="#000" opacity=".13"/><path d="M9.50 0.50 H100.50 C106.05 0.50 106.78 2.69 107.90 7.90 A72.05 72.05 0 0 1 107.90 38.10 C106.78 43.31 106.05 45.50 100.50 45.50 H9.50 C3.95 45.50 3.22 43.31 2.10 38.10 A72.05 72.05 0 0 1 2.10 7.90 C3.22 2.69 3.95 0.50 9.50 0.50 Z" fill="url(#gBtn)" stroke="#727272" stroke-width="1"/><path d="M9.70 1.50 H100.30 C105.25 1.50 105.89 3.46 106.90 8.10 A70.18 70.18 0 0 1 106.90 37.90 C105.89 42.54 105.25 44.50 100.30 44.50 H9.70 C4.75 44.50 4.11 42.54 3.10 37.90 A70.18 70.18 0 0 1 3.10 8.10 C4.11 3.46 4.75 1.50 9.70 1.50 Z" fill="none" stroke="#fff" stroke-width="1.2" opacity=".75"/></svg><svg class="abs" style="left:-3px;top:1px" width="44" height="42" viewBox="0 0 44 42">
<path d="M6.5 7 L15.7 5.1 L18.4 7.6 L33.1 6.2 L33.9 10.3 L35.8 10.3 L35.2 31.4 L6.5 36.3 Z" fill="url(#gFoB)" stroke="#d89a10" stroke-width="0.6"/>
<path d="M7 17.8 L18.6 16.2 L33.6 10.4 L35.6 10.4 L35 31.2 L6.8 36 Z" fill="url(#gFoF)"/>
<path d="M22.5 6 L32.2 16.3 L26.6 16.3 C26 25 21 30.5 11.7 35.8 C16.5 29.5 18.5 23.5 18.7 16.3 L11.9 16.3 Z" fill="url(#gArr)" stroke="#0c4a10" stroke-width="0.8" stroke-linejoin="round"/>
</svg><span class="t" style="left:34px;top:15px">Retour</span></div>
<div class="btn" style="left:270px;top:716px;width:110px;height:46px"><svg class="bb" width="112" height="48" viewBox="0 0 112 48"><path d="M9.50 0.50 H100.50 C106.05 0.50 106.78 2.69 107.90 7.90 A72.05 72.05 0 0 1 107.90 38.10 C106.78 43.31 106.05 45.50 100.50 45.50 H9.50 C3.95 45.50 3.22 43.31 2.10 38.10 A72.05 72.05 0 0 1 2.10 7.90 C3.22 2.69 3.95 0.50 9.50 0.50 Z" transform="translate(0.8,1)" fill="#000" opacity=".13"/><path d="M9.50 0.50 H100.50 C106.05 0.50 106.78 2.69 107.90 7.90 A72.05 72.05 0 0 1 107.90 38.10 C106.78 43.31 106.05 45.50 100.50 45.50 H9.50 C3.95 45.50 3.22 43.31 2.10 38.10 A72.05 72.05 0 0 1 2.10 7.90 C3.22 2.69 3.95 0.50 9.50 0.50 Z" fill="url(#gBtn)" stroke="#727272" stroke-width="1"/><path d="M9.70 1.50 H100.30 C105.25 1.50 105.89 3.46 106.90 8.10 A70.18 70.18 0 0 1 106.90 37.90 C105.89 42.54 105.25 44.50 100.30 44.50 H9.70 C4.75 44.50 4.11 42.54 3.10 37.90 A70.18 70.18 0 0 1 3.10 8.10 C4.11 3.46 4.75 1.50 9.70 1.50 Z" fill="none" stroke="#fff" stroke-width="1.2" opacity=".75"/></svg><svg class="abs" style="left:-3px;top:-1px" width="48" height="46" viewBox="0 0 48 46">
<path d="M7.1 9.2 L27.3 3.3 L42.4 11 L20.2 17.8 Z" fill="#d9bc78"/>
<path d="M7.1 9.2 L23.7 10.7 L20.2 17.8 Z" fill="#b69a58"/>
<path d="M27.3 3.3 L42.4 11 L23.7 10.7 Z" fill="#c8aa66"/>
<path d="M7.1 9.2 L27.3 3.3 L23.7 10.7 Z" fill="#e8d090"/>
<path d="M23.7 10.7 L42.4 11 L20.2 17.8 Z" fill="#e2c684"/>
<path d="M7.1 9.2 L20.2 17.8 L19.6 42.4 L7.7 33.5 Z" fill="url(#gBxL)"/>
<path d="M20.2 17.8 L42.4 11 L41.8 35 L19.6 42.4 Z" fill="url(#gBxR)"/>
</svg><span class="t" style="left:40px;top:7px">Structure<br>Rayon</span></div>
<div class="btn" style="left:395px;top:716px;width:110px;height:46px"><svg class="bb" width="112" height="48" viewBox="0 0 112 48"><path d="M9.50 0.50 H100.50 C106.05 0.50 106.78 2.69 107.90 7.90 A72.05 72.05 0 0 1 107.90 38.10 C106.78 43.31 106.05 45.50 100.50 45.50 H9.50 C3.95 45.50 3.22 43.31 2.10 38.10 A72.05 72.05 0 0 1 2.10 7.90 C3.22 2.69 3.95 0.50 9.50 0.50 Z" transform="translate(0.8,1)" fill="#000" opacity=".13"/><path d="M9.50 0.50 H100.50 C106.05 0.50 106.78 2.69 107.90 7.90 A72.05 72.05 0 0 1 107.90 38.10 C106.78 43.31 106.05 45.50 100.50 45.50 H9.50 C3.95 45.50 3.22 43.31 2.10 38.10 A72.05 72.05 0 0 1 2.10 7.90 C3.22 2.69 3.95 0.50 9.50 0.50 Z" fill="url(#gBtn)" stroke="#727272" stroke-width="1"/><path d="M9.70 1.50 H100.30 C105.25 1.50 105.89 3.46 106.90 8.10 A70.18 70.18 0 0 1 106.90 37.90 C105.89 42.54 105.25 44.50 100.30 44.50 H9.70 C4.75 44.50 4.11 42.54 3.10 37.90 A70.18 70.18 0 0 1 3.10 8.10 C4.11 3.46 4.75 1.50 9.70 1.50 Z" fill="none" stroke="#fff" stroke-width="1.2" opacity=".75"/></svg><svg class="abs" style="left:2px;top:1px;clip-path:path('M7.20 -0.80 H96.80 C102.35 -0.80 103.03 1.40 104.20 6.60 A65.60 65.60 0 0 1 104.20 35.40 C103.03 40.60 102.35 42.80 96.80 42.80 H7.20 C1.65 42.80 0.97 40.60 -0.20 35.40 A65.60 65.60 0 0 1 -0.20 6.60 C0.97 1.40 1.65 -0.80 7.20 -0.80 Z')" width="42" height="42" viewBox="0 0 42 42"><path d="M-0.2 0.8h18v17.4h-18z M22 0.8h17.6v17.4h-17.6z M-0.2 23.8h18v17h-18z M22 23.8h17.6v17h-17.6z" fill="#999"/></svg><span class="t" style="left:41px;top:7px">Structure<br>Groupe</span></div>
<div class="btn" style="left:520px;top:716px;width:110px;height:46px"><svg class="bb" width="112" height="48" viewBox="0 0 112 48"><path d="M9.50 0.50 H100.50 C106.05 0.50 106.78 2.69 107.90 7.90 A72.05 72.05 0 0 1 107.90 38.10 C106.78 43.31 106.05 45.50 100.50 45.50 H9.50 C3.95 45.50 3.22 43.31 2.10 38.10 A72.05 72.05 0 0 1 2.10 7.90 C3.22 2.69 3.95 0.50 9.50 0.50 Z" transform="translate(0.8,1)" fill="#000" opacity=".13"/><path d="M9.50 0.50 H100.50 C106.05 0.50 106.78 2.69 107.90 7.90 A72.05 72.05 0 0 1 107.90 38.10 C106.78 43.31 106.05 45.50 100.50 45.50 H9.50 C3.95 45.50 3.22 43.31 2.10 38.10 A72.05 72.05 0 0 1 2.10 7.90 C3.22 2.69 3.95 0.50 9.50 0.50 Z" fill="url(#gBtn)" stroke="#727272" stroke-width="1"/><path d="M9.70 1.50 H100.30 C105.25 1.50 105.89 3.46 106.90 8.10 A70.18 70.18 0 0 1 106.90 37.90 C105.89 42.54 105.25 44.50 100.30 44.50 H9.70 C4.75 44.50 4.11 42.54 3.10 37.90 A70.18 70.18 0 0 1 3.10 8.10 C4.11 3.46 4.75 1.50 9.70 1.50 Z" fill="none" stroke="#fff" stroke-width="1.2" opacity=".75"/></svg><svg class="abs" style="left:2px;top:1px;clip-path:path('M7.20 -0.80 H96.80 C102.35 -0.80 103.03 1.40 104.20 6.60 A65.60 65.60 0 0 1 104.20 35.40 C103.03 40.60 102.35 42.80 96.80 42.80 H7.20 C1.65 42.80 0.97 40.60 -0.20 35.40 A65.60 65.60 0 0 1 -0.20 6.60 C0.97 1.40 1.65 -0.80 7.20 -0.80 Z')" width="42" height="42" viewBox="0 0 42 42"><path d="M0.2 0.8h10.7v10.7h-10.7z M14.6 0.8h10.7v10.7h-10.7z M29.1 0.8h10.7v10.7h-10.7z M0.2 15.4h10.7v10.7h-10.7z M14.6 15.4h10.7v10.7h-10.7z M29.1 15.4h10.7v10.7h-10.7z M0.2 30h10.7v10.6h-10.7z M14.6 30h10.7v10.6h-10.7z M29.1 30h10.7v10.6h-10.7z" fill="#999"/></svg><span class="t" style="left:40px;top:7px">Structure<br>S Groupe</span></div>
<div class="btn" style="left:645px;top:716px;width:110px;height:46px"><svg class="bb" width="112" height="48" viewBox="0 0 112 48"><path d="M9.50 0.50 H100.50 C106.05 0.50 106.78 2.69 107.90 7.90 A72.05 72.05 0 0 1 107.90 38.10 C106.78 43.31 106.05 45.50 100.50 45.50 H9.50 C3.95 45.50 3.22 43.31 2.10 38.10 A72.05 72.05 0 0 1 2.10 7.90 C3.22 2.69 3.95 0.50 9.50 0.50 Z" transform="translate(0.8,1)" fill="#000" opacity=".13"/><path d="M9.50 0.50 H100.50 C106.05 0.50 106.78 2.69 107.90 7.90 A72.05 72.05 0 0 1 107.90 38.10 C106.78 43.31 106.05 45.50 100.50 45.50 H9.50 C3.95 45.50 3.22 43.31 2.10 38.10 A72.05 72.05 0 0 1 2.10 7.90 C3.22 2.69 3.95 0.50 9.50 0.50 Z" fill="url(#gBtn)" stroke="#727272" stroke-width="1"/><path d="M9.70 1.50 H100.30 C105.25 1.50 105.89 3.46 106.90 8.10 A70.18 70.18 0 0 1 106.90 37.90 C105.89 42.54 105.25 44.50 100.30 44.50 H9.70 C4.75 44.50 4.11 42.54 3.10 37.90 A70.18 70.18 0 0 1 3.10 8.10 C4.11 3.46 4.75 1.50 9.70 1.50 Z" fill="none" stroke="#fff" stroke-width="1.2" opacity=".75"/></svg><svg class="abs" style="left:-3px;top:5px" width="48" height="34" viewBox="0 0 48 34">
<path d="M12 17.5 Q20 11 30 15 Q33.5 18.5 34.2 21.5 Q24 22 14 22.5 Z" fill="#fff"/>
<circle cx="21.7" cy="17.7" r="5.3" fill="url(#gIris)"/>
<circle cx="21.5" cy="17.2" r="2.6" fill="#000"/>
<circle cx="23.1" cy="15.7" r="1" fill="#fff"/>
<path d="M5.1 17.3 C6 15 14 9.1 22 9.2 C28 9.4 32.8 14.3 37 19.8 C33 17.8 29.6 14.6 24 13 C17 12.2 11.4 15.8 8.8 18 C7 18.8 5 18.5 5.1 17.3 Z" fill="#000"/>
<path d="M8 12.6 Q16 9.2 23.5 9.2" fill="none" stroke="#000" stroke-width="0.6"/>
<path d="M9.4 21.5 Q10.6 20.8 11.6 21.5 C15 22.8 22 23.4 34.2 21.3 L34 21.9 C24 25 14 25 9.4 22.8 Z" fill="#000"/>
<path d="M30.5 16.5 L34.4 21.6" stroke="#000" stroke-width="0.9"/>
<path d="M13.6 15.6 Q11.6 18.6 15.4 21.8" fill="none" stroke="#000" stroke-width="0.9"/>
</svg><span class="t" style="left:34px;top:7px">Détail<br>produit</span></div>
<div class="btn" style="left:770px;top:716px;width:113px;height:46px"><svg class="bb" width="115" height="48" viewBox="0 0 115 48"><path d="M9.50 0.50 H103.50 C109.05 0.50 109.78 2.69 110.90 7.90 A72.05 72.05 0 0 1 110.90 38.10 C109.78 43.31 109.05 45.50 103.50 45.50 H9.50 C3.95 45.50 3.22 43.31 2.10 38.10 A72.05 72.05 0 0 1 2.10 7.90 C3.22 2.69 3.95 0.50 9.50 0.50 Z" transform="translate(0.8,1)" fill="#000" opacity=".13"/><path d="M9.50 0.50 H103.50 C109.05 0.50 109.78 2.69 110.90 7.90 A72.05 72.05 0 0 1 110.90 38.10 C109.78 43.31 109.05 45.50 103.50 45.50 H9.50 C3.95 45.50 3.22 43.31 2.10 38.10 A72.05 72.05 0 0 1 2.10 7.90 C3.22 2.69 3.95 0.50 9.50 0.50 Z" fill="url(#gBtn)" stroke="#727272" stroke-width="1"/><path d="M9.70 1.50 H103.30 C108.25 1.50 108.89 3.46 109.90 8.10 A70.18 70.18 0 0 1 109.90 37.90 C108.89 42.54 108.25 44.50 103.30 44.50 H9.70 C4.75 44.50 4.11 42.54 3.10 37.90 A70.18 70.18 0 0 1 3.10 8.10 C4.11 3.46 4.75 1.50 9.70 1.50 Z" fill="none" stroke="#fff" stroke-width="1.2" opacity=".75"/></svg><svg class="abs" style="left:-3px;top:-1px" width="48" height="46" viewBox="0 0 48 46">
<circle cx="21.1" cy="22.8" r="14.8" fill="url(#gHelp)" stroke="#d8d2c0" stroke-width="0.6"/>
<path d="M7.3 28 A14.6 14.6 0 0 1 34.6 16.4 Q22 16.8 7.3 28 Z" fill="url(#gHelpG)" opacity=".85"/>
<text x="21.6" y="33" font-family="Liberation Sans, sans-serif" font-weight="bold" font-size="28.5" text-anchor="middle" fill="#ececec">?</text>
</svg><span class="t" style="left:33.5px;top:15px">Aide (F1)</span></div>
<div class="btn" style="left:898px;top:716px;width:110px;height:46px"><svg class="bb" width="112" height="48" viewBox="0 0 112 48"><path d="M9.50 0.50 H100.50 C106.05 0.50 106.78 2.69 107.90 7.90 A72.05 72.05 0 0 1 107.90 38.10 C106.78 43.31 106.05 45.50 100.50 45.50 H9.50 C3.95 45.50 3.22 43.31 2.10 38.10 A72.05 72.05 0 0 1 2.10 7.90 C3.22 2.69 3.95 0.50 9.50 0.50 Z" transform="translate(0.8,1)" fill="#000" opacity=".13"/><path d="M9.50 0.50 H100.50 C106.05 0.50 106.78 2.69 107.90 7.90 A72.05 72.05 0 0 1 107.90 38.10 C106.78 43.31 106.05 45.50 100.50 45.50 H9.50 C3.95 45.50 3.22 43.31 2.10 38.10 A72.05 72.05 0 0 1 2.10 7.90 C3.22 2.69 3.95 0.50 9.50 0.50 Z" fill="url(#gBtn)" stroke="#727272" stroke-width="1"/><path d="M9.70 1.50 H100.30 C105.25 1.50 105.89 3.46 106.90 8.10 A70.18 70.18 0 0 1 106.90 37.90 C105.89 42.54 105.25 44.50 100.30 44.50 H9.70 C4.75 44.50 4.11 42.54 3.10 37.90 A70.18 70.18 0 0 1 3.10 8.10 C4.11 3.46 4.75 1.50 9.70 1.50 Z" fill="none" stroke="#fff" stroke-width="1.2" opacity=".75"/></svg><svg class="abs" style="left:-5px;top:-1px" width="48" height="46" viewBox="0 0 48 46">
<path d="M8.6 9.2 C14 10.6 18.6 12.6 22 14.5 C26 17 33.5 23 36.5 29.1 L32.6 35 C31.6 31 29.4 27.6 27.3 24.9 C24.6 21.4 22 19.2 19.6 17.2 C16.4 14.4 12.6 11.6 8.6 9.2 Z" fill="url(#gRed)"/>
<path d="M32 6.8 L38 10.7 C31 13.8 26 18 22.6 22.6 C19 27.4 17 32 16.3 38 C14.2 33 13.8 28.6 15.6 24 C18.4 16.6 24.4 10.8 32 6.8 Z" fill="url(#gRed)"/>
</svg><span class="t" style="left:34.5px;top:15px">Quitter</span></div>
</body></html>
